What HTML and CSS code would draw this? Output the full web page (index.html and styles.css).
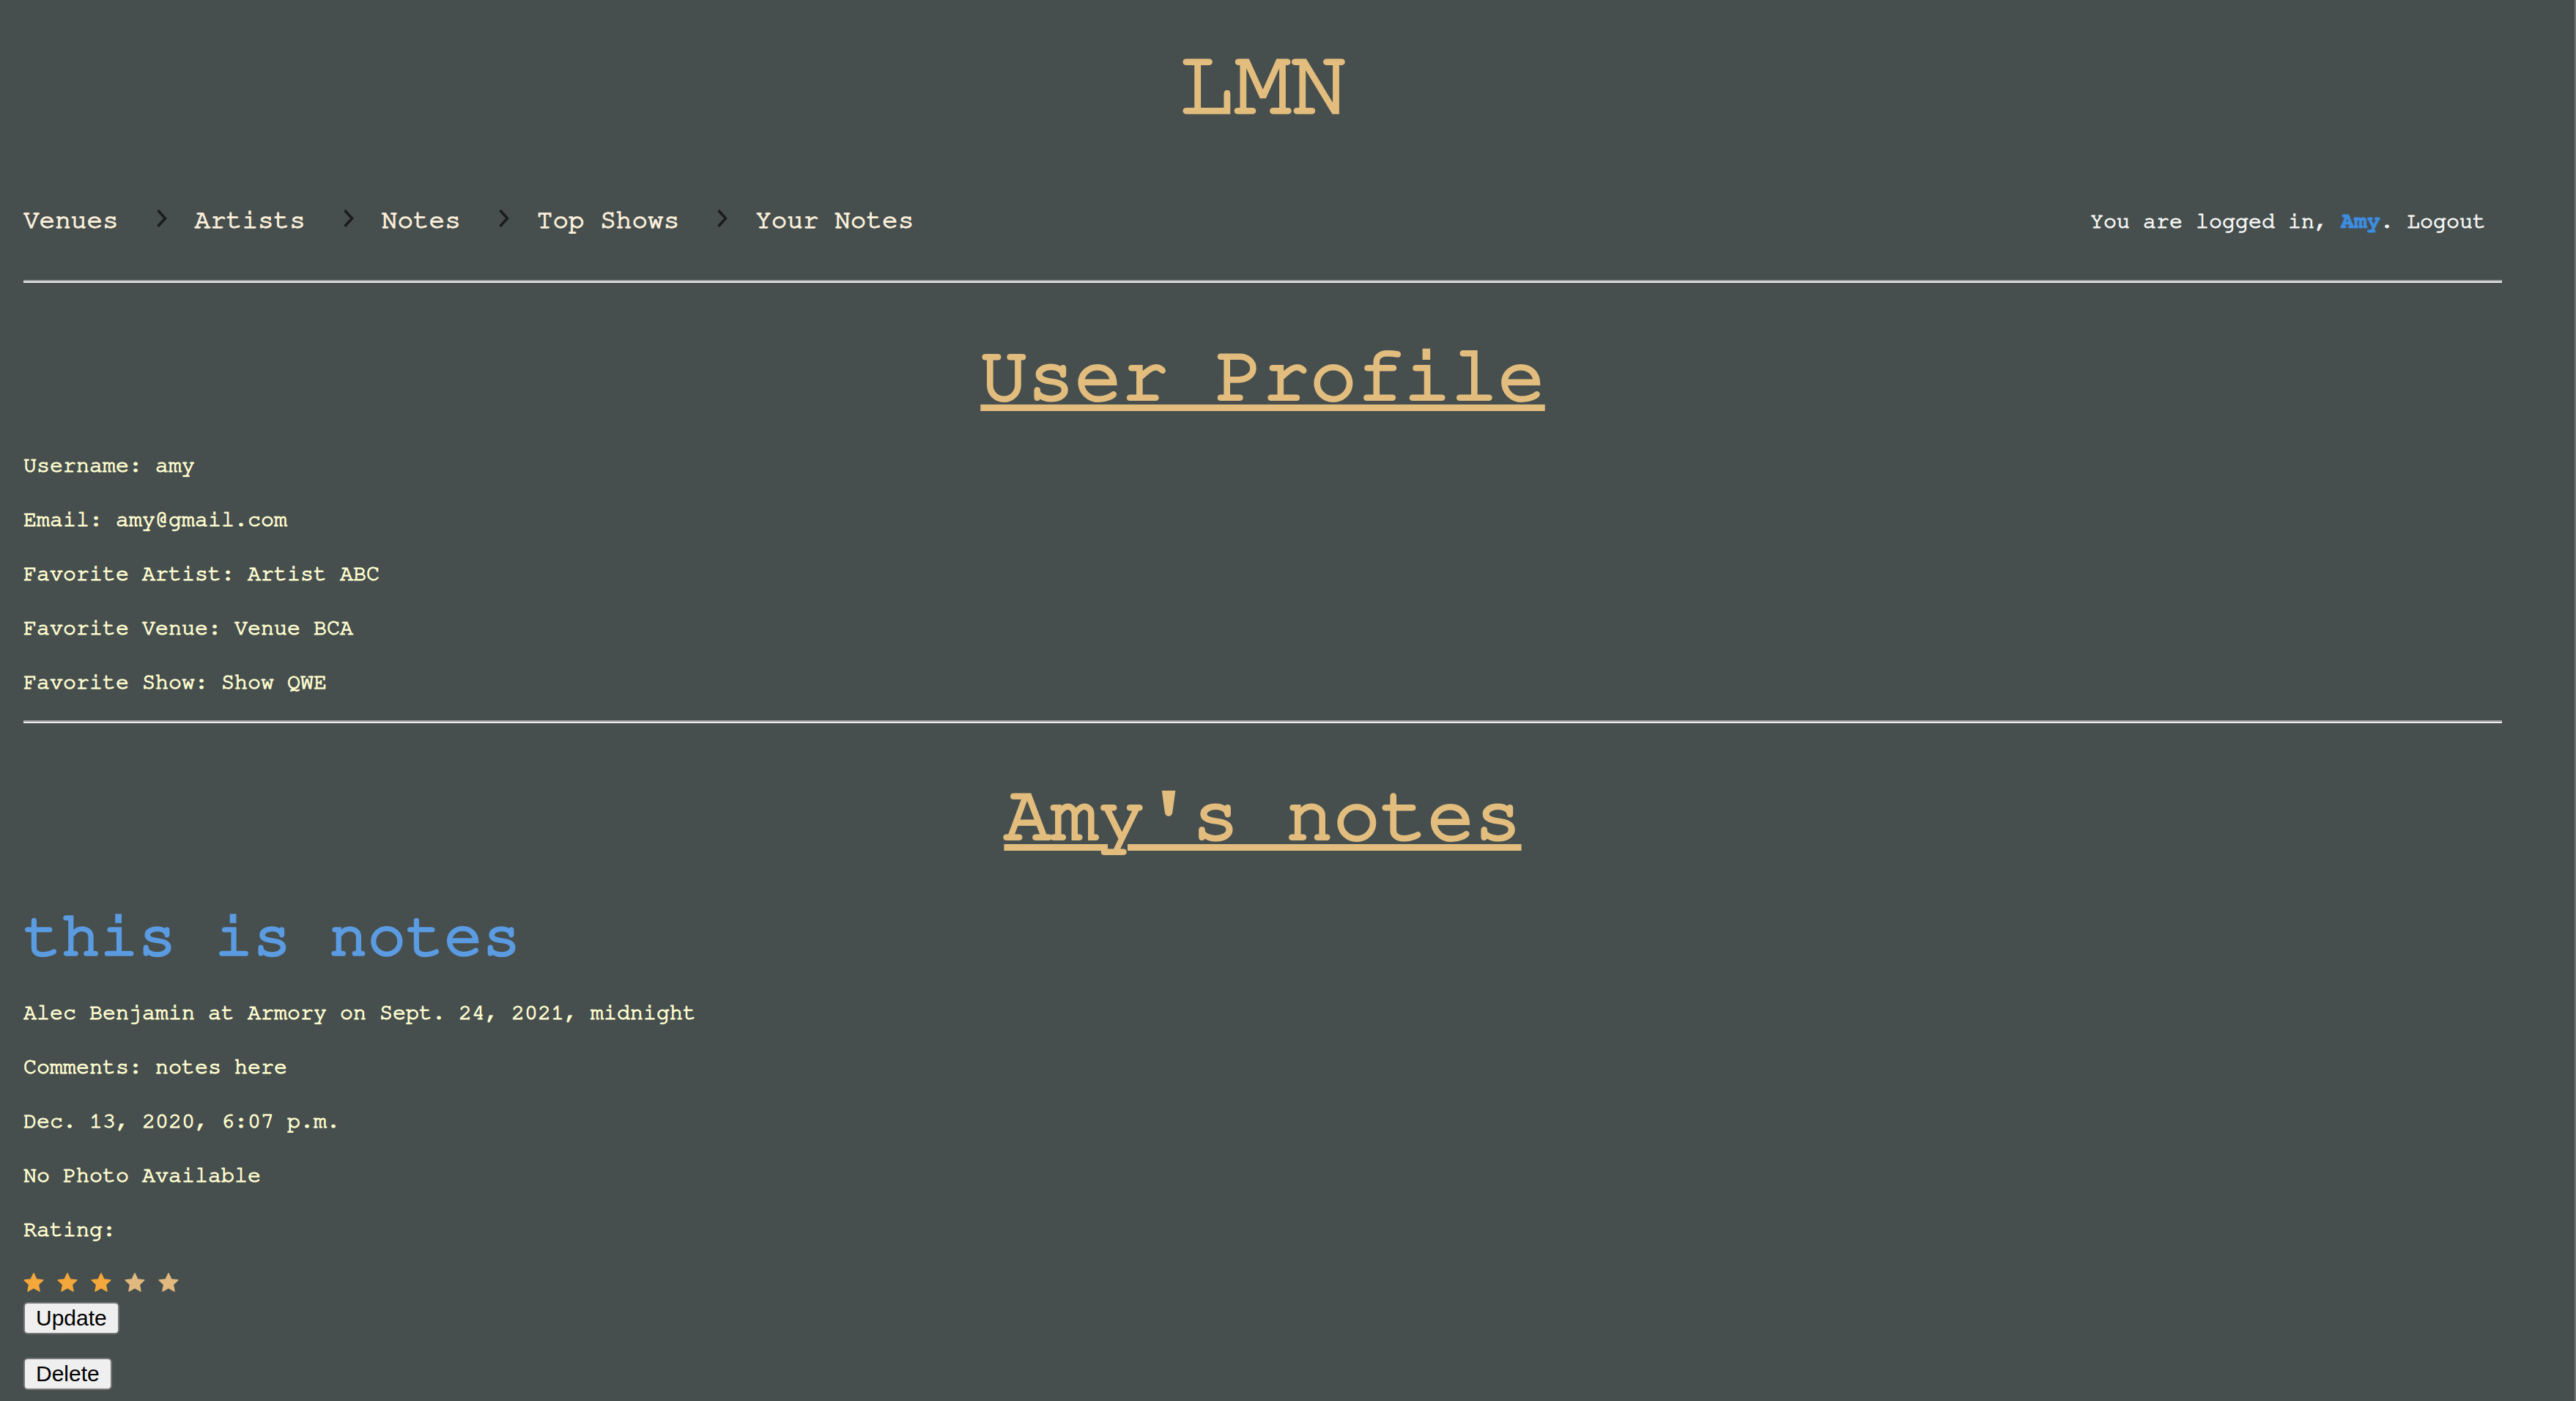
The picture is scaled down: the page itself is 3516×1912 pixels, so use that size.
FILE: index.html
```html
<!DOCTYPE html>
<html lang="en">
<head>
<meta charset="utf-8">
<title>LMN</title>
<link rel="stylesheet" href="styles.css">
</head>
<body>
<h1 class="site-title">LMN</h1>
<nav class="topnav">
  <ul class="crumbs">
    <li class="crumb"><a href="#">Venues</a></li>
    <li class="sep"><svg class="chev" viewBox="0 0 15 26" width="15" height="26"><polyline points="2.5,2 12.5,13 2.5,24" /></svg></li>
    <li class="crumb"><a href="#">Artists</a></li>
    <li class="sep"><svg class="chev" viewBox="0 0 15 26" width="15" height="26"><polyline points="2.5,2 12.5,13 2.5,24" /></svg></li>
    <li class="crumb"><a href="#">Notes</a></li>
    <li class="sep"><svg class="chev" viewBox="0 0 15 26" width="15" height="26"><polyline points="2.5,2 12.5,13 2.5,24" /></svg></li>
    <li class="crumb"><a href="#">Top Shows</a></li>
    <li class="sep"><svg class="chev" viewBox="0 0 15 26" width="15" height="26"><polyline points="2.5,2 12.5,13 2.5,24" /></svg></li>
    <li class="crumb"><a href="#">Your Notes</a></li>
  </ul>
  <div class="login">You are logged in, <a class="user" href="#">Amy</a>. <a href="#">Logout</a></div>
</nav>
<hr class="rule rule-top">
<h2 class="section-title first">User Profile</h2>
<section class="profile">
  <p class="line">Username: amy</p>
  <p class="line">Email: amy@gmail.com</p>
  <p class="line">Favorite Artist: Artist ABC</p>
  <p class="line">Favorite Venue: Venue BCA</p>
  <p class="line">Favorite Show: Show QWE</p>
</section>
<hr class="rule rule-mid">
<h2 class="section-title second">Amy's notes</h2>
<article class="note">
  <h3 class="note-title">this is notes</h3>
  <p class="line">Alec Benjamin at Armory on Sept. 24, 2021, midnight</p>
  <p class="line">Comments: notes here</p>
  <p class="line">Dec. 13, 2020, 6:07 p.m.</p>
  <p class="line">No Photo Available</p>
  <p class="line">Rating:</p>
  <div class="stars">
    <svg class="star on" viewBox="1.6 1.6 20.8 19.4" width="28" height="26"><path d="M12 2.2l2.9 6.1 6.7.8-4.9 4.6 1.3 6.6L12 17l-6 3.3 1.3-6.6-4.9-4.6 6.7-.8z"/></svg>
    <svg class="star on" viewBox="1.6 1.6 20.8 19.4" width="28" height="26"><path d="M12 2.2l2.9 6.1 6.7.8-4.9 4.6 1.3 6.6L12 17l-6 3.3 1.3-6.6-4.9-4.6 6.7-.8z"/></svg>
    <svg class="star on" viewBox="1.6 1.6 20.8 19.4" width="28" height="26"><path d="M12 2.2l2.9 6.1 6.7.8-4.9 4.6 1.3 6.6L12 17l-6 3.3 1.3-6.6-4.9-4.6 6.7-.8z"/></svg>
    <svg class="star off" viewBox="1.6 1.6 20.8 19.4" width="28" height="26"><path d="M12 2.2l2.9 6.1 6.7.8-4.9 4.6 1.3 6.6L12 17l-6 3.3 1.3-6.6-4.9-4.6 6.7-.8z"/></svg>
    <svg class="star off" viewBox="1.6 1.6 20.8 19.4" width="28" height="26"><path d="M12 2.2l2.9 6.1 6.7.8-4.9 4.6 1.3 6.6L12 17l-6 3.3 1.3-6.6-4.9-4.6 6.7-.8z"/></svg>
  </div>
  <form class="action update"><button type="button" class="btn">Update</button></form>
  <form class="action delete"><button type="button" class="btn">Delete</button></form>
</article>
</body>
</html>
```

FILE: styles.css
```css
html {
  background: #464f4e;
  border-right: 2px solid #6f7675;
  min-height: 100%;
  box-sizing: border-box;
}

body {
  margin: 44px 99px 0 32px;
  font-family: "Nimbus Mono PS", "Nimbus Mono L", "FreeMono", "Courier 10 Pitch", "Courier", "Liberation Mono", monospace;
  color: #fffdd0;
}

a {
  color: inherit;
  text-decoration: none;
}

.site-title {
  margin: 0;
  font-size: 128px;
  line-height: 145px;
  font-weight: normal;
  text-align: center;
  color: #e2bd7e;
  -webkit-text-stroke: 3.5px #e2bd7e;
}

.topnav {
  margin-top: 91px;
  display: flex;
  justify-content: space-between;
  align-items: baseline;
}

.crumbs {
  list-style: none;
  margin: 0;
  padding: 0;
  display: flex;
  align-items: center;
}

.crumb {
  font-size: 36px;
  line-height: 41px;
  color: #fbefdb;
  -webkit-text-stroke: 1.3px #fbefdb;
}

.sep {
  display: flex;
  margin: 2px 38px 7px 51px;
}

.chev polyline {
  fill: none;
  stroke: #1b1d1d;
  stroke-width: 3.6;
  stroke-linecap: butt;
  stroke-linejoin: miter;
}

.login {
  font-size: 30px;
  line-height: 41px;
  color: #f7f7f5;
  margin-right: 22px;
  -webkit-text-stroke: 1.1px #f7f7f5;
}

.login .user {
  color: #3d8de0;
  font-weight: bold;
  -webkit-text-stroke: 1px #3d8de0;
}

.rule {
  height: 0;
  border: none;
  border-top: 2px solid #9c9d9c;
  border-bottom: 2px solid #ededed;
  margin-left: 0;
  margin-right: 0;
  margin-bottom: 0;
}

.rule-top {
  margin-top: 59px;
}

.rule-mid {
  margin-top: 15px;
}

.section-title {
  margin: 0;
  font-size: 107px;
  line-height: 121px;
  font-weight: normal;
  text-align: center;
  color: #e2bd7e;
  -webkit-text-stroke: 4.2px #e2bd7e;
  text-decoration: underline;
  text-decoration-thickness: 9px;
  text-underline-offset: 7px;
}

.section-title.first {
  margin-top: 66px;
}

.section-title.second {
  margin-top: 65px;
}

.profile {
  margin-top: 25px;
}

.line {
  margin: 0;
  font-size: 30px;
  line-height: 74px;
  color: #fffdd0;
  -webkit-text-stroke: 1.1px #fffdd0;
}

.note-title {
  margin: 54px 0 19px;
  font-size: 87px;
  line-height: 99px;
  font-weight: normal;
  color: #5b9be1;
  -webkit-text-stroke: 3.6px #5b9be1;
}

.stars {
  display: flex;
  gap: 18px;
  margin-top: 22px;
  height: 26px;
}

.star path {
  stroke-width: 1.1;
  stroke-linejoin: round;
}

.star.on path {
  fill: #f4a73a;
  stroke: #f4a73a;
}

.star.off path {
  fill: #e1b97f;
  stroke: #e1b97f;
}

.action {
  margin: 0;
  display: block;
}

.action.update {
  margin-top: 14px;
}

.action.delete {
  margin-top: 32px;
}

.btn {
  font-family: "Liberation Sans", Arial, sans-serif;
  font-size: 30px;
  height: 44px;
  padding: 0 15px;
  border: 2px solid #767676;
  border-radius: 6px;
  background: #efefef;
  color: #000;
  line-height: 38px;
}
```
